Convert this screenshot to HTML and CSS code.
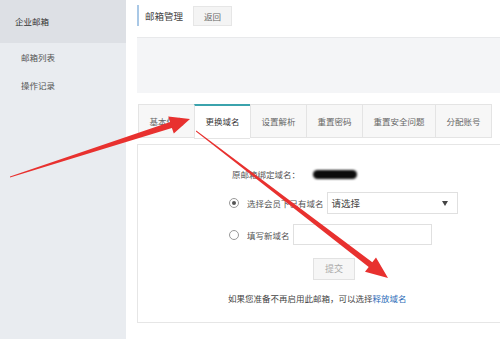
FILE: index.html
```html
<!DOCTYPE html>
<html lang="zh-CN">
<head>
    <meta charset="UTF-8">
    <meta name="viewport" content="width=device-width, initial-scale=1.0">
    <title>邮箱管理</title>
    <link rel="stylesheet" href="styles.css">
</head>
<body>
    <div class="pagina">
        <div class="lateral">
            <div class="lateral-topo">企业邮箱</div>
            <div class="lateral-item">邮箱列表</div>
            <div class="lateral-item">操作记录</div>
        </div>

        <div class="principal">
            <div class="cabecalho">
                <span class="titulo">邮箱管理</span>
                <span class="botao-voltar">返回</span>
            </div>

            <div class="faixa"></div>

            <div class="abas">
                <div class="aba">基本信息</div>
                <div class="aba ativa">更换域名</div>
                <div class="aba">设置解析</div>
                <div class="aba">重置密码</div>
                <div class="aba">重置安全问题</div>
                <div class="aba">分配账号</div>
            </div>

            <div class="painel">
                <div class="linha linha-original">
                    <span>原邮箱绑定域名：</span>
                    <span class="borrao"></span>
                </div>
                <div class="linha linha-select">
                    <span class="radio marcado"></span>
                    <span class="rotulo">选择会员下已有域名</span>
                    <div class="select">
                        <span>请选择</span>
                        <span class="seta"></span>
                    </div>
                </div>
                <div class="linha linha-input">
                    <span class="radio"></span>
                    <span class="rotulo">填写新域名</span>
                    <div class="campo"></div>
                </div>
                <div class="linha-enviar">
                    <span class="botao-enviar">提交</span>
                </div>
                <div class="nota">如果您准备不再启用此邮箱，可以选择<a class="link">释放域名</a></div>
            </div>
        </div>
    </div>

    <svg class="setas" width="500" height="339" viewBox="0 0 500 339">
        <polygon fill="#e8312f" points="10,176.5 170.1,122.1 168.2,116.4 190,119 173.8,133.6 171.9,127.9 10,177.5"/>
        <polygon fill="#e8312f" points="196.3,130.6 372.3,262.2 376,257.5 388,278 365,271.7 368.7,267 195.9,131.4"/>
    </svg>
</body>
</html>
```

FILE: styles.css
```css
body {
    margin: 0;
    padding: 0;
    font-family: "Noto Sans CJK SC", "Liberation Sans", sans-serif;
    font-size: 8.5px;
    color: #555;
    background-color: #fff;
}
.pagina {
    display: flex;
    width: 500px;
    height: 339px;
    overflow: hidden;
}
.lateral {
    width: 126px;
    flex-shrink: 0;
    background-color: #e9ecf0;
}
.lateral-topo {
    height: 43px;
    line-height: 43px;
    padding-left: 15px;
    background-color: #dde0e5;
    color: #333;
}
.lateral-item {
    height: 28px;
    line-height: 28px;
    padding-left: 21px;
    color: #555;
}
.principal {
    flex: 1;
    padding-left: 11px;
    overflow: hidden;
}
.cabecalho {
    display: flex;
    align-items: center;
    margin-top: 5px;
    height: 21px;
    border-left: 2px solid #a9c8e6;
    padding-left: 6px;
}
.titulo {
    font-size: 9.5px;
    color: #444;
}
.botao-voltar {
    margin-left: 10px;
    width: 37px;
    height: 18px;
    line-height: 18px;
    text-align: center;
    background-color: #f4f4f4;
    border: 1px solid #e6e6e6;
    color: #666;
}
.faixa {
    margin-top: 11px;
    height: 55px;
    background-color: #f4f5f7;
    border-top: 1px solid #e8e9eb;
}
.abas {
    display: flex;
    margin-top: 11px;
    padding-left: 1px;
}
.aba {
    height: 32px;
    line-height: 32px;
    padding: 0 10.5px;
    background-color: #f7f7f7;
    border: 1px solid #e4e4e4;
    border-right: none;
    color: #666;
    white-space: nowrap;
}
.aba:last-child {
    border-right: 1px solid #e4e4e4;
}
.aba.ativa {
    background-color: #fff;
    border-top: 2px solid #3ba3ad;
    line-height: 31px;
    color: #333;
}
.painel {
    margin-top: 5px;
    height: 177px;
    width: 400px;
    border: 1px solid #e6e6e6;
    padding-left: 91px;
    box-sizing: content-box;
}
.linha {
    display: flex;
    align-items: center;
}
.linha-original {
    margin-top: 22px;
    height: 14px;
    padding-left: 3px;
}
.borrao {
    display: inline-block;
    margin-left: 13px;
    width: 44px;
    height: 9px;
    background-color: #0c0c0c;
    border-radius: 5px;
    filter: blur(0.8px);
}
.linha-select {
    margin-top: 11px;
    height: 22px;
}
.linha-input {
    margin-top: 10px;
    height: 21px;
}
.radio {
    display: inline-block;
    width: 8px;
    height: 8px;
    border: 1px solid #999;
    border-radius: 50%;
    position: relative;
    background-color: #fff;
}
.radio.marcado::after {
    content: "";
    position: absolute;
    left: 2px;
    top: 2px;
    width: 4px;
    height: 4px;
    border-radius: 50%;
    background-color: #555;
}
.rotulo {
    margin-left: 8px;
    margin-right: 3px;
}
.select {
    display: flex;
    align-items: center;
    justify-content: space-between;
    width: 116px;
    height: 20px;
    border: 1px solid #e0e0e0;
    padding: 0 9px 0 4px;
    font-size: 9.5px;
    color: #444;
}
.seta {
    width: 0;
    height: 0;
    border-left: 3.5px solid transparent;
    border-right: 3.5px solid transparent;
    border-top: 5px solid #444;
}
.campo {
    width: 137px;
    height: 19px;
    border: 1px solid #e0e0e0;
}
.linha-enviar {
    margin-top: 13px;
    padding-left: 84px;
    height: 22px;
}
.botao-enviar {
    display: inline-block;
    width: 40px;
    height: 20px;
    line-height: 20px;
    text-align: center;
    background-color: #f6f6f6;
    border: 1px solid #e2e2e2;
    color: #aaa;
    font-size: 9px;
}
.nota {
    margin-top: 12px;
    line-height: 12px;
    margin-left: -1px;
    color: #444;
}
.link {
    color: #2b6cb8;
}
.setas {
    position: absolute;
    left: 0;
    top: 0;
    pointer-events: none;
}
```
